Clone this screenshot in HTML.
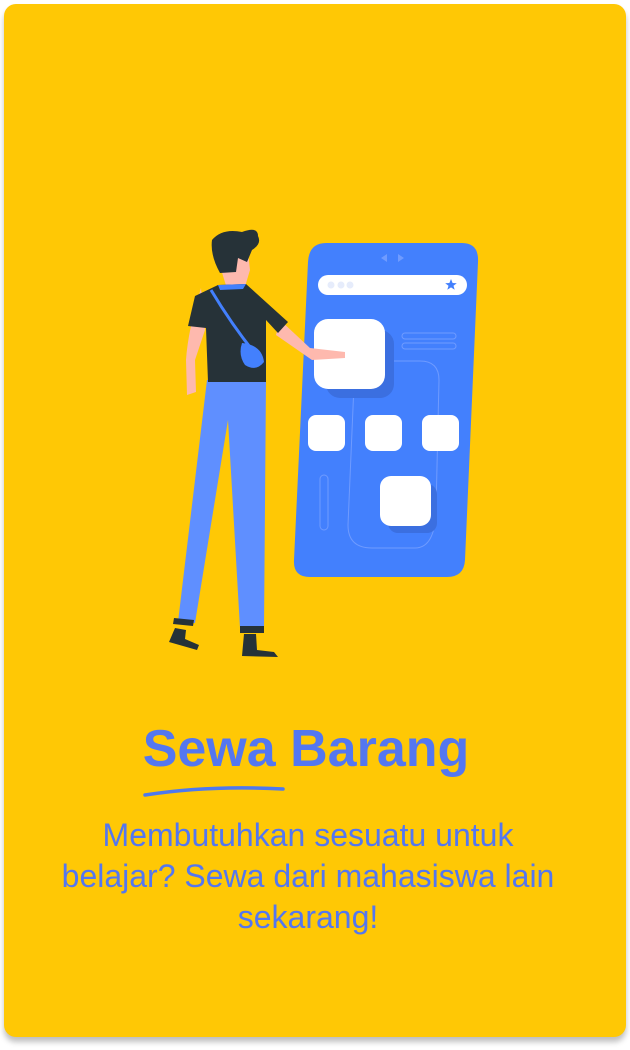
<!DOCTYPE html>
<html><head><style>
html,body{margin:0;padding:0;background:#fff;width:630px;height:1050px;overflow:hidden}
.card{position:absolute;left:4px;top:4px;width:622px;height:1033px;background:#FFC805;border-radius:12px;box-shadow:0 5px 6px rgba(0,0,0,0.25)}
.t{position:absolute;left:-9px;width:630px;text-align:center;color:#5477F0;font-family:"Liberation Sans",sans-serif;white-space:nowrap}
</style></head><body>
<div class="card"></div>
<svg width="630" height="1050" style="position:absolute;left:0;top:0">
<path d="M326 243 H462 Q479 243 478 262 L465 560 Q464 577 447 577 H310 Q293 577 294 560 L308 262 Q309 243 326 243Z" fill="#4380FD"/>
<path d="M387 254 l-6 4 6 4z M398 254 l6 4 -6 4z" fill="#6F9BFF"/>
<rect x="318" y="275" width="149" height="20" rx="10" fill="#fff"/>
<circle cx="331" cy="285" r="3.5" fill="#E6ECFB"/><circle cx="341" cy="285" r="3.5" fill="#E6ECFB"/><circle cx="350" cy="285" r="3.5" fill="#E6ECFB"/>
<path d="M451 279 l1.6 4 4.2 .2 -3.3 2.6 1.2 4 -3.7-2.4 -3.7 2.4 1.2-4 -3.3-2.6 4.2-.2z" fill="#4380FD"/>
<rect x="402" y="333" width="54" height="6" rx="3" fill="none" stroke="#6F9BFF" stroke-width="1"/>
<rect x="402" y="343" width="54" height="6" rx="3" fill="none" stroke="#6F9BFF" stroke-width="1"/>
<path d="M355 361 H420 Q439 361 439 380 L436 510 Q435 548 415 548 H372 Q348 548 348 525 Z" fill="none" stroke="#6F9BFF" stroke-width="1"/>
<rect x="320" y="475" width="8" height="55" rx="4" fill="none" stroke="#6F9BFF" stroke-width="1"/>
<rect x="326" y="330" width="68" height="68" rx="14" fill="#3B6FE0"/>
<rect x="314" y="319" width="71" height="70" rx="14" fill="#fff"/>
<rect x="308" y="415" width="37" height="36" rx="8" fill="#fff"/>
<rect x="365" y="415" width="37" height="36" rx="8" fill="#fff"/>
<rect x="422" y="415" width="37" height="36" rx="8" fill="#fff"/>
<rect x="388" y="484" width="49" height="49" rx="10" fill="#3B6FE0"/>
<rect x="380" y="476" width="51" height="50" rx="11" fill="#fff"/>
<path d="M207 380 L178 622 L195 623 L228 420 L240 628 L264 628 L266 380Z" fill="#5F8FFF"/>
<path d="M174 618 l20 2 -1 6 -20-2z M240 626 h24 v7 h-24z" fill="#263238"/>
<path d="M175 628 l-6 14 28 8 2-5 -14-6 1-9z M244 634 l-2 22 36 1 -4-5 -17-2 -1-16z" fill="#263238"/>
<path d="M201 288 Q188 330 186 360 L187 395 L196 392 L195 360 L205 330Z" fill="#FEB9AE"/>
<path d="M280 320 L310 348 L345 352 L345 358 L312 360 L276 335Z" fill="#FEB9AE"/>
<path d="M215 250 Q236 238 248 252 L250 270 L244 290 L228 292 Z" fill="#FEB9AE"/>
<path d="M218 285 L246 284 L288 322 L278 333 L266 320 L266 382 L208 382 L206 328 L188 326 L195 296Z" fill="#263238"/>
<path d="M218 285 L246 284 L243 289 L220 290Z" fill="#4380FD"/>
<path d="M211 290 Q235 330 262 362" stroke="#4380FD" stroke-width="3" fill="none"/>
<path d="M242 343 Q262 345 264 362 Q256 372 245 365 Q238 355 242 343Z" fill="#4380FD"/>
<path d="M212 240 Q222 228 242 232 Q258 226 258 236 Q262 244 252 250 L247 262 L238 258 L236 272 L220 273 Q210 255 212 240Z" fill="#263238"/>
</svg>
<div class="t" style="top:717px;font-size:52px;font-weight:bold;line-height:64px">Sewa Barang</div>
<svg width="630" height="1050" style="position:absolute;left:0;top:0"><path d="M145 795 Q210 785 283 789" stroke="#4E79EE" stroke-width="3.5" fill="none" stroke-linecap="round"/></svg>
<div class="t" style="top:815px;font-size:32px;line-height:41px;left:-7px">Membutuhkan sesuatu untuk<br>belajar? Sewa dari mahasiswa lain<br>sekarang!</div>
</body></html>
